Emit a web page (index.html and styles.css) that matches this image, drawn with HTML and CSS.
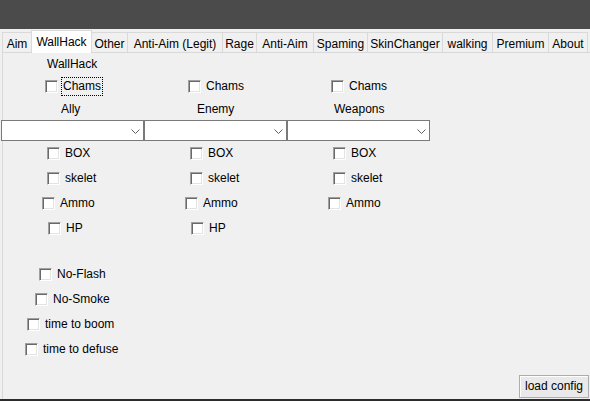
FILE: index.html
```html
<!DOCTYPE html>
<html>
<head>
<meta charset="utf-8">
<link rel="stylesheet" href="styles.css">
</head>
<body>
<div class="window">
  <div class="titlebar"></div>
  <div class="tabstrip">
    <div class="tab w-aim">Aim</div>
    <div class="tab tab-active w-wall">WallHack</div>
    <div class="tab w-other">Other</div>
    <div class="tab w-legit">Anti-Aim (Legit)</div>
    <div class="tab w-rage">Rage</div>
    <div class="tab w-anti">Anti-Aim</div>
    <div class="tab w-spam">Spaming</div>
    <div class="tab w-skin">SkinChanger</div>
    <div class="tab w-walk">walking</div>
    <div class="tab w-prem">Premium</div>
    <div class="tab w-about">About</div>
  </div>
  <div class="page">
    <div class="heading">WallHack</div>

    <div class="grid row first-row">
      <div class="check off-44"><span class="cb"></span><span class="txt focus">Chams</span></div>
      <div class="check off-44"><span class="cb"></span><span class="txt">Chams</span></div>
      <div class="check off-44"><span class="cb"></span><span class="txt">Chams</span></div>
    </div>

    <div class="grid labels">
      <div class="lbl l-ally">Ally</div>
      <div class="lbl l-enemy">Enemy</div>
      <div class="lbl l-weap">Weapons</div>
    </div>

    <div class="grid combos">
      <div class="combo"><svg class="chev" width="9" height="5" viewBox="0 0 9 5"><path d="M0.5 0.5 L4.5 4.5 L8.5 0.5" fill="none" stroke="#606060" stroke-width="1"/></svg></div>
      <div class="combo"><svg class="chev" width="9" height="5" viewBox="0 0 9 5"><path d="M0.5 0.5 L4.5 4.5 L8.5 0.5" fill="none" stroke="#606060" stroke-width="1"/></svg></div>
      <div class="combo"><svg class="chev" width="9" height="5" viewBox="0 0 9 5"><path d="M0.5 0.5 L4.5 4.5 L8.5 0.5" fill="none" stroke="#606060" stroke-width="1"/></svg></div>
    </div>

    <div class="grid row box-row">
      <div class="check off-46"><span class="cb"></span><span class="txt">BOX</span></div>
      <div class="check off-46"><span class="cb"></span><span class="txt">BOX</span></div>
      <div class="check off-46"><span class="cb"></span><span class="txt">BOX</span></div>
    </div>

    <div class="grid row next-row">
      <div class="check off-46"><span class="cb"></span><span class="txt">skelet</span></div>
      <div class="check off-46"><span class="cb"></span><span class="txt">skelet</span></div>
      <div class="check off-46"><span class="cb"></span><span class="txt">skelet</span></div>
    </div>

    <div class="grid row next-row">
      <div class="check off-41"><span class="cb"></span><span class="txt">Ammo</span></div>
      <div class="check off-41"><span class="cb"></span><span class="txt">Ammo</span></div>
      <div class="check off-41"><span class="cb"></span><span class="txt">Ammo</span></div>
    </div>

    <div class="grid row next-row">
      <div class="check off-47"><span class="cb"></span><span class="txt">HP</span></div>
      <div class="check off-47"><span class="cb"></span><span class="txt">HP</span></div>
    </div>

    <div class="row misc-first">
      <div class="check off-36"><span class="cb"></span><span class="txt">No-Flash</span></div>
    </div>
    <div class="row next-row">
      <div class="check off-32"><span class="cb"></span><span class="txt">No-Smoke</span></div>
    </div>
    <div class="row next-row">
      <div class="check off-24"><span class="cb"></span><span class="txt">time to boom</span></div>
    </div>
    <div class="row next-row">
      <div class="check off-22"><span class="cb"></span><span class="txt">time to defuse</span></div>
    </div>

    <div class="footer">
      <button class="btn">load config</button>
    </div>
  </div>
  <div class="bottomline"></div>
</div>
</body>
</html>
```

FILE: styles.css
```css
* { box-sizing: border-box; }
html, body {
  margin: 0;
  padding: 0;
  background: #f0f0f0;
}
body {
  width: 590px;
  height: 401px;
  overflow: hidden;
  font-family: "Liberation Sans", Arial, sans-serif;
  font-size: 12px;
  color: #000;
}
.window {
  width: 590px;
  height: 401px;
  display: flex;
  flex-direction: column;
}
.titlebar {
  height: 29px;
  background: #4b4b4b;
  flex: none;
}
.tabstrip {
  height: 23px;
  flex: none;
  display: flex;
  align-items: flex-end;
  padding-left: 2px;
}
.tab {
  height: 20px;
  border: 1px solid #d9d9d9;
  border-bottom: none;
  background: #f0f0f0;
  padding-top: 5px;
  line-height: 13px;
  text-align: center;
  white-space: nowrap;
  margin-left: -1px;
}
.tab:first-child { margin-left: 0; }
.tab-active {
  height: 23px;
  margin-bottom: -1px;
  background: #fff;
  position: relative;
  z-index: 2;
}
.w-aim { width: 30px; }
.w-wall { width: 61px; }
.w-other { width: 37px; }
.w-legit { width: 96px; }
.w-rage { width: 35px; }
.w-anti { width: 58px; }
.w-spam { width: 55px; }
.w-skin { width: 76px; }
.w-walk { width: 51px; }
.w-prem { width: 57px; }
.w-about { width: 40px; }

.page {
  flex: none;
  height: 347px;
  margin-left: 2px;
  border-top: 1px solid #d9d9d9;
  border-left: 1px solid #d9d9d9;
  display: flex;
  flex-direction: column;
}
.heading {
  margin-top: 5px;
  margin-left: 44px;
  line-height: 13px;
  height: 13px;
}
.grid {
  display: grid;
  grid-template-columns: 143px 143px 143px;
  margin-left: -2px;
}
.row {
  height: 13px;
  align-items: center;
}
.first-row { margin-top: 9px; }
.box-row { margin-top: 6px; }
.next-row { margin-top: 12px; }
.misc-first { margin-top: 33px; }

.check {
  display: flex;
  align-items: center;
  height: 13px;
  white-space: nowrap;
}
.cb {
  flex: none;
  width: 13px;
  height: 13px;
  background: #fff;
  border: 1px solid;
  border-color: #a0a0a0 #ffffff #ffffff #a0a0a0;
  box-shadow: inset 1px 1px 0 #696969, inset -1px -1px 0 #e3e3e3;
}
.txt {
  margin-left: 5px;
  line-height: 13px;
}
.focus {
  margin-left: 3px;
  padding: 2px 1px 2px 1px;
  border: 1px dotted #000;
}
.off-44 { margin-left: 44px; }
.off-46 { margin-left: 46px; }
.off-41 { margin-left: 41px; }
.off-47 { margin-left: 47px; }
.off-36 { margin-left: 36px; }
.off-32 { margin-left: 32px; }
.off-24 { margin-left: 24px; }
.off-22 { margin-left: 22px; }

.labels {
  margin-top: 10px;
  height: 13px;
  line-height: 13px;
}
.l-ally { margin-left: 60px; }
.l-enemy { margin-left: 53px; }
.l-weap { margin-left: 47px; }

.combos {
  margin-top: 4px;
  height: 21px;
}
.combo {
  height: 21px;
  background: #fff;
  border: 1px solid #7a7a7a;
  display: flex;
  align-items: center;
  justify-content: flex-end;
  padding-right: 3px;
}
.chev { display: block; margin-top: 1px; }

.footer {
  margin-top: auto;
  display: flex;
  justify-content: flex-end;
  padding-right: 1px;
  padding-bottom: 1px;
}
.btn {
  width: 70px;
  height: 23px;
  margin: 0;
  padding: 0 0 0 5px;
  text-align: left;
  font-family: "Liberation Sans", Arial, sans-serif;
  font-size: 12px;
  color: #000;
  background: #e9e9e9;
  border: 1px solid #adadad;
  box-shadow: inset 1px 1px 0 #ffffff;
  line-height: 13px;
  white-space: nowrap;
}
.bottomline {
  flex: none;
  height: 2px;
  background: #2b2b2b;
}
```
